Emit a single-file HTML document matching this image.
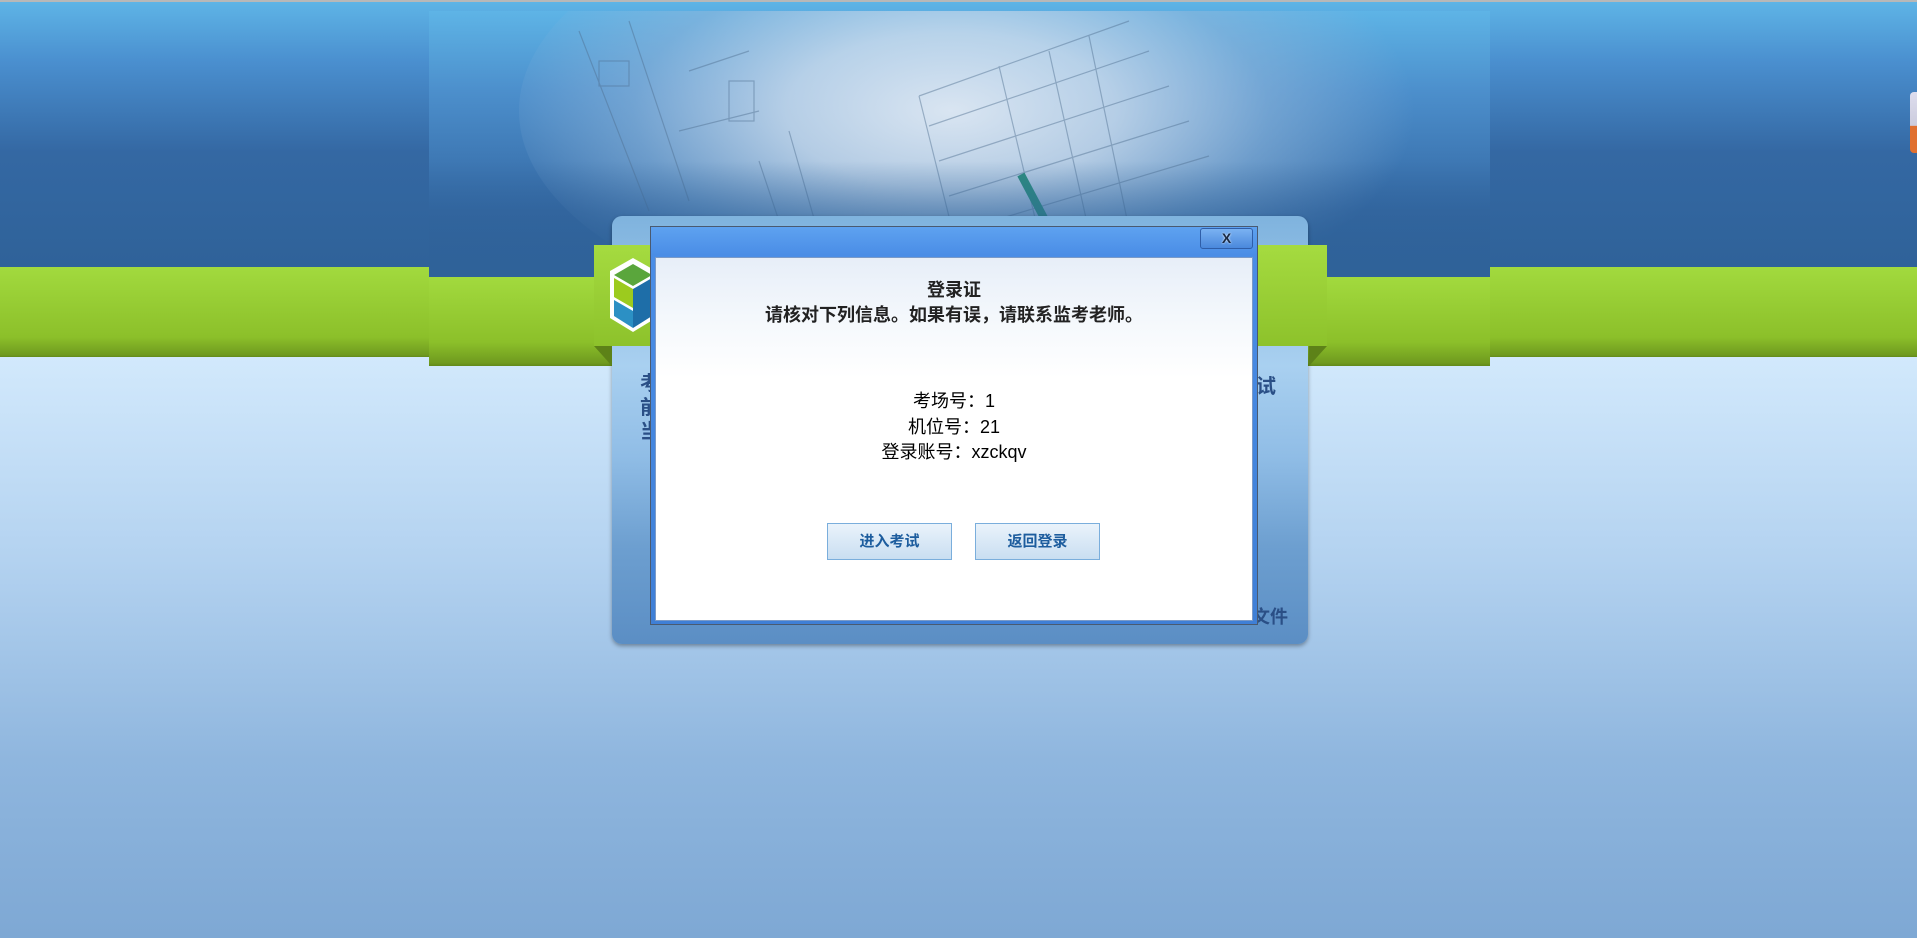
<!DOCTYPE html>
<html><head><meta charset="utf-8">
<style>
*{margin:0;padding:0;box-sizing:border-box}
body{width:1917px;height:938px;overflow:hidden;position:relative;font-family:"Liberation Sans","Noto Sans CJK SC",sans-serif;
background:linear-gradient(#d2e9fc 357px,#b3d2f0 560px,#8fb6de 760px,#7ea8d4 938px);}
.abs{position:absolute}
</style></head><body>
<div class="abs" style="left:0;top:0;width:1917px;height:2px;background:#b8b8b8"></div>
<div class="abs" style="left:0;top:2px;width:1917px;height:265px;background:linear-gradient(#5eb4e6 0,#4a8fcf 60px,#3468a3 150px,#2f6299 265px)"></div>
<div class="abs" style="left:0;top:267px;width:1917px;height:90px;background:linear-gradient(#a2da3e,#8cc02a 70px,#6f9a1f 88px,#628a1a 90px)"></div>
<!-- center image -->
<div class="abs" style="left:429px;top:11px;width:1061px;height:266px;background:#2f6299;overflow:hidden">
 <div class="abs" style="left:0;top:0;width:1061px;height:266px;background:linear-gradient(#5eb4e6,#4c8fcc 80px,#3468a3 200px,#2f6299)"></div>
 <div class="abs" style="left:90px;top:-120px;width:900px;height:440px;border-radius:50%;background:radial-gradient(ellipse at 48% 50%,rgba(225,234,244,.95) 0,rgba(200,218,236,.85) 25%,rgba(140,180,218,.6) 48%,rgba(80,140,200,0) 70%)"></div>
 <svg class="abs" style="left:0;top:0" width="1061" height="266" stroke="#4f6f90" stroke-width="1.2" fill="none" opacity=".45">
  <path d="M490 85 L700 10 M500 115 L720 40 M510 150 L740 75 M520 185 L760 110 M530 220 L780 145 M490 85 L535 266 M570 55 L620 266 M620 40 L670 266 M660 25 L710 266"/>
  <path d="M150 20 L220 200 M200 10 L260 190 M260 60 L320 40 M250 120 L330 100 M330 150 L380 300 M360 120 L400 260"/>
  <rect x="170" y="50" width="30" height="25"/><rect x="300" y="70" width="25" height="40"/>
 </svg>
 <div class="abs" style="left:602px;top:160px;width:8px;height:60px;background:#2b8c7e;transform:rotate(-28deg)"></div>
 <div class="abs" style="left:0;top:150px;width:1061px;height:116px;background:linear-gradient(rgba(47,98,153,0),rgba(47,98,153,.85) 90px,#2f6299)"></div>
</div>
<div class="abs" style="left:429px;top:277px;width:1061px;height:89px;background:linear-gradient(#a2da3e,#8cc02a 65px,#6f9a1f 86px,#628a1a 89px)"></div>
<!-- orange tab right -->
<div class="abs" style="left:1910px;top:92px;width:7px;height:61px;background:linear-gradient(#dde 0,#ccd 55%,#e07030 56%);border-radius:4px 0 0 4px"></div>
<!-- back panel -->
<div class="abs" style="left:612px;top:216px;width:696px;height:428px;border-radius:10px;background:linear-gradient(#7fb3de,#a9d0f0 150px,#90bde6 240px,#6d9fd0 330px,#5b8ec4 428px);box-shadow:0 2px 4px rgba(0,0,0,.35)"></div>
<!-- green ribbon -->
<div class="abs" style="left:594px;top:245px;width:733px;height:101px;background:linear-gradient(#a5db40,#8dc22b)"></div>
<div class="abs" style="left:594px;top:346px;width:0;height:0;border-top:20px solid #5d8218;border-left:18px solid transparent"></div>
<div class="abs" style="left:1309px;top:346px;width:0;height:0;border-top:20px solid #5d8218;border-right:18px solid transparent"></div>
<!-- logo -->
<svg class="abs" style="left:608px;top:256px" width="50" height="80">
 <polygon points="25,2 48,15 48,62 25,76 2,62 2,15" fill="#fff"/>
 <polygon points="25,8 44,19 25,30 6,19" fill="#5aa63c"/>
 <polygon points="6,22 25,33 25,52 6,41" fill="#9ccb1e"/>
 <polygon points="6,44 25,55 25,72 6,60" fill="#2c90c4"/>
 <polygon points="44,22 25,33 25,72 44,60" fill="#1e6ea8"/>
</svg>
<div class="abs" style="left:640px;top:372px;font-size:20px;font-weight:bold;color:#2a4f86;line-height:24px">考<br>前<br>当</div>
<div class="abs" style="left:1256px;top:370px;font-size:20px;font-weight:bold;color:#2a4f86">试</div>
<div class="abs" style="left:1252px;top:603px;font-size:18px;font-weight:bold;color:#2a4f86">文件</div>
<!-- dialog -->
<div class="abs" style="left:650px;top:226px;width:608px;height:399px;border:1px solid #4a5a70;background:linear-gradient(#5ea2f0,#4a8de6 28px,#3f7fd6);">
 <div class="abs" style="left:549px;top:1px;width:53px;height:21px;border:1px solid #2f5ea8;border-radius:3px;background:linear-gradient(#7ab2f2,#4a88dc);color:#1a2a44;font-size:14px;text-align:center;line-height:19px;font-weight:bold;text-shadow:0 0 2px #fff">X</div>
 <div class="abs" style="left:4px;top:30px;width:598px;height:364px;border:1px solid #7a9ac8;background:linear-gradient(#e7eef8 0,#f4f8fc 60px,#fff 120px);text-align:center;color:#222">
  <div style="position:absolute;top:20px;width:100%;font-size:18px;font-weight:bold;line-height:24px">登录证</div>
  <div style="position:absolute;top:45px;width:100%;font-size:18px;font-weight:bold;line-height:24px">请核对下列信息。如果有误，请联系监考老师。</div>
  <div style="position:absolute;top:131px;width:100%;font-size:18px;line-height:25.5px;color:#000">考场号：1<br>机位号：21<br>登录账号：xzckqv</div>
  <div style="position:absolute;left:171px;top:265px;width:125px;height:37px;border:1px solid #7aaedc;background:linear-gradient(#eaf3fb,#c9def1);color:#1d5d9e;font-weight:bold;font-size:15px;line-height:35px">进入考试</div>
  <div style="position:absolute;left:319px;top:265px;width:125px;height:37px;border:1px solid #7aaedc;background:linear-gradient(#eaf3fb,#c9def1);color:#1d5d9e;font-weight:bold;font-size:15px;line-height:35px">返回登录</div>
 </div>
</div>
</body></html>
